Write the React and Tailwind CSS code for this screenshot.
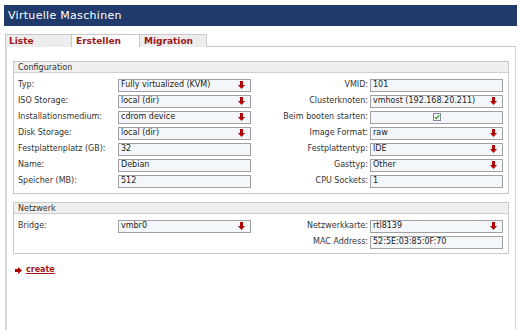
import React from "react";

const Arrow = () => (
  <svg width="7" height="8" viewBox="0 0 7 8" className="shrink-0">
    <path d="M2 0H5V4H7L3.5 8L0 4H2Z" fill="#b40000" />
  </svg>
);

const Select = ({ value, w = "w-[133px]" }) => (
  <div className={`${w} h-[13px] border border-[#a0a0a0] bg-[#f3f7fb] flex items-center justify-between pl-[2px] pr-[5px] text-[8px] leading-none text-[#222]`}>
    <span>{value}</span>
    <Arrow />
  </div>
);

const Input = ({ value, w = "w-[133px]" }) => (
  <div className={`${w} h-[13px] border border-[#a0a0a0] bg-[#f3f7fb] flex items-center pl-[2px] text-[8px] leading-none text-[#222]`}>
    <span>{value}</span>
  </div>
);

const Check = ({ w = "w-[133px]" }) => (
  <div className={`${w} h-[13px] border border-[#a0a0a0] bg-[#f3f7fb] flex items-center justify-center`}>
    <div className="w-[8px] h-[8px] border border-[#7a8a9a] bg-white flex items-center justify-center">
      <svg width="6" height="6" viewBox="0 0 6 6">
        <path d="M0.8 3L2.4 4.6L5.2 1.2" stroke="#2a9a2a" strokeWidth="1.3" fill="none" />
      </svg>
    </div>
  </div>
);

const Row = ({ l, lc, r, rc }) => (
  <div className="flex items-center h-[16px]">
    <div className="w-[100px] text-[8px] leading-none text-[#333]">{l}</div>
    <div className="w-[133px]">{lc}</div>
    <div className="flex-1 text-right pr-[2px] text-[8px] leading-none text-[#333]">{r}</div>
    <div className="w-[133px]">{rc}</div>
  </div>
);

const Fieldset = ({ title, children, h }) => (
  <div className={`border border-[#c8c8c8] bg-white ${h}`}>
    <div className="h-[11px] bg-[#efefef] border-b border-[#d0d0d0] text-[8px] leading-[11px] text-[#333] pl-[4px]">{title}</div>
    <div className="pl-[4px] pr-[5px] pt-[4px]">{children}</div>
  </div>
);

export default function App() {
  return (
    <div className="w-[520px] h-[330px] bg-white overflow-hidden" style={{ fontFamily: '"DejaVu Sans", Verdana, sans-serif' }}>
      <div className="pt-[5px] pl-[4px] pr-[3px]">
        <div className="h-[21px] bg-[#1f3a6b] text-white text-[11px] leading-[21px] pl-[4px] tracking-[0.3px]">Virtuelle Maschinen</div>
      </div>
      <div className="pl-[5px] pr-[4px] pt-[8px]">
        <div className="flex h-[13px]">
          <div className="w-[67px] h-[13px] bg-[#ededed] border border-[#c8c8c8] border-b-0 text-[9px] font-bold text-[#a01818] leading-[12px] pl-[3px]">Liste</div>
          <div className="w-[67px] h-[13px] bg-white border-t border-[#c8c8c8] text-[9px] font-bold text-[#a01818] leading-[12px] pl-[4px]">Erstellen</div>
          <div className="w-[68px] h-[13px] bg-[#ededed] border border-[#c8c8c8] border-b-0 text-[9px] font-bold text-[#a01818] leading-[12px] pl-[4px]">Migration</div>
          <div className="flex-1 border-b border-[#c8c8c8]"></div>
        </div>
        <div className="h-[290px] border-l-2 border-r border-[#d8d8d8] px-[6px] pt-[14px]">
          <Fieldset title="Configuration">
            <Row l="Typ:" lc={<Select value="Fully virtualized (KVM)" />} r="VMID:" rc={<Input value="101" />} />
            <Row l="ISO Storage:" lc={<Select value="local (dir)" />} r="Clusterknoten:" rc={<Select value="vmhost (192.168.20.211)" />} />
            <Row l="Installationsmedium:" lc={<Select value="cdrom device" />} r="Beim booten starten:" rc={<Check />} />
            <Row l="Disk Storage:" lc={<Select value="local (dir)" />} r="Image Format:" rc={<Select value="raw" />} />
            <Row l="Festplattenplatz (GB):" lc={<Input value="32" />} r="Festplattentyp:" rc={<Select value="IDE" />} />
            <Row l="Name:" lc={<Input value="Debian" />} r="Gasttyp:" rc={<Select value="Other" />} />
            <Row l="Speicher (MB):" lc={<Input value="512" />} r="CPU Sockets:" rc={<Input value="1" />} />
            <div className="h-[4px]"></div>
          </Fieldset>
          <div className="h-[8px]"></div>
          <Fieldset title="Netzwerk" h="h-[52px]">
            <Row l="Bridge:" lc={<Select value="vmbr0" />} r="Netzwerkkarte:" rc={<Select value="rtl8139" />} />
            <Row l="" lc={null} r="MAC Address:" rc={<Input value="52:5E:03:85:0F:70" />} />
          </Fieldset>
          <div className="flex items-center gap-[4px] mt-[10px] pl-[2px]">
            <svg width="7" height="7" viewBox="0 0 7 7">
              <path d="M0 2H3V0L7 3.5L3 7V5H0Z" fill="#b40000" />
            </svg>
            <span className="text-[8px] font-bold text-[#a01818] underline">create</span>
          </div>
        </div>
      </div>
    </div>
  );
}
